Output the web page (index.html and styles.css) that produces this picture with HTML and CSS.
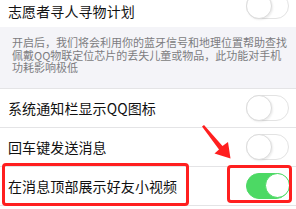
FILE: index.html
```html
<!DOCTYPE html>
<html lang="zh-CN">
<head>
<meta charset="utf-8">
<title>设置</title>
<link rel="stylesheet" href="styles.css">
</head>
<body>
<div class="page">
  <div class="row row-first">
    <span class="label label-first">志愿者寻人寻物计划</span>
    <span class="toggle toggle-first"><span class="knob"></span></span>
  </div>
  <div class="desc">开启后，我们将会利用你的蓝牙信号和地理位置帮助查找<br>佩戴QQ物联定位芯片的丢失儿童或物品，此功能对手机<br>功耗影响极低</div>
  <div class="row">
    <span class="label">系统通知栏显示QQ图标</span>
    <span class="toggle"><span class="knob"></span></span>
  </div>
  <div class="row">
    <span class="label">回车键发送消息</span>
    <span class="toggle"><span class="knob"></span></span>
  </div>
  <div class="row">
    <span class="label">在消息顶部展示好友小视频</span>
    <span class="toggle on"><span class="knob"></span></span>
  </div>
</div>
<div class="mark mark-text"></div>
<div class="mark mark-toggle"></div>
<svg class="arrow" width="296" height="209" viewBox="0 0 296 209">
  <polygon points="202,126.5 204,125 222.5,146 228,142 230.5,158.5 214.5,153.5 219,149.5" fill="#ff1f1f"/>
</svg>
</body>
</html>
```
FILE: styles.css
```css
html, body {
  margin: 0;
  padding: 0;
  background: #ffffff;
}
body {
  width: 296px;
  height: 209px;
  overflow: hidden;
  position: relative;
  font-family: "Noto Sans CJK SC", "Noto Sans", sans-serif;
  color: #111111;
}
.page {
  margin-top: -11px;
}
.row {
  height: 38px;
  display: flex;
  align-items: center;
  justify-content: space-between;
  padding: 0 7px 0 8px;
  border-bottom: 1px solid #e4e4e6;
}
.row-first {
  border-bottom: none;
}
.label {
  font-size: 14px;
  line-height: 16px;
  letter-spacing: 0.1px;
}
.label-first {
  margin-top: 6px;
}
.toggle {
  width: 43px;
  height: 26px;
  box-sizing: border-box;
  border-radius: 13px;
  border: 1.5px solid #e3e3e3;
  background: #ffffff;
  position: relative;
  flex: none;
}
.toggle-first {
  margin-bottom: 4px;
}
.knob {
  position: absolute;
  left: -1.5px;
  top: -1.5px;
  width: 26px;
  height: 26px;
  box-sizing: border-box;
  border-radius: 50%;
  background: #ffffff;
  border: 1px solid #dcdcdc;
  box-shadow: 1px 1px 2px rgba(0, 0, 0, 0.08);
}
.toggle.on {
  background: #4cd964;
  border-color: #4cd964;
}
.toggle.on .knob {
  left: auto;
  right: -1.5px;
  border-color: #4cd964;
  width: 25px;
  height: 25px;
  top: -1px;
  box-shadow: none;
}
.desc {
  height: 62px;
  box-sizing: border-box;
  background: #f4f4f8;
  padding: 9px 0 0 12px;
  font-size: 11px;
  line-height: 12.5px;
  color: #7c7c80;
  white-space: nowrap;
  border-bottom: 1px solid #e4e4e6;
}
.mark {
  position: absolute;
  box-sizing: border-box;
  border: 3px solid #ff1f1f;
  border-radius: 4px;
}
.mark-text {
  left: 2px;
  top: 163px;
  width: 187px;
  height: 43px;
}
.mark-toggle {
  left: 227px;
  top: 165px;
  width: 65px;
  height: 38px;
}
.arrow {
  position: absolute;
  left: 0;
  top: 0;
}
```
